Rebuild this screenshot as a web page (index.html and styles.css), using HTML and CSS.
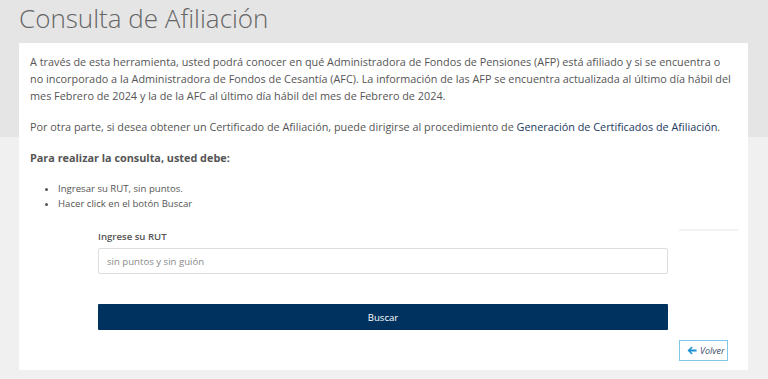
FILE: index.html
```html
<!DOCTYPE html>
<html lang="es">
<head>
    <meta charset="UTF-8">
    <meta name="viewport" content="width=device-width, initial-scale=1.0">
    <title>Consulta de Afiliación</title>
    <link rel="stylesheet" href="styles.css">
</head>
<body>
    <h1 class="page-title">Consulta de Afiliación</h1>

    <div class="card">
        <p>A través de esta herramienta, usted podrá conocer en qué Administradora de Fondos de Pensiones (AFP) está afiliado y si se encuentra o no incorporado a la Administradora de Fondos de Cesantía (AFC). La información de las AFP se encuentra actualizada al último día hábil del mes Febrero de 2024 y la de la AFC al último día hábil del mes de Febrero de 2024.</p>
        <p>Por otra parte, si desea obtener un Certificado de Afiliación, puede dirigirse al procedimiento de <a href="#" class="link">Generación de Certificados de Afiliación</a>.</p>
        <p class="steps-title">Para realizar la consulta, usted debe:</p>
        <ul class="steps">
            <li>Ingresar su RUT, sin puntos.</li>
            <li>Hacer click en el botón Buscar</li>
        </ul>

        <div class="form-grid">
            <form class="rut-form" onsubmit="return false">
                <label class="rut-label" for="rut">Ingrese su RUT</label>
                <input class="rut-input" id="rut" type="text" placeholder="sin puntos y sin guión">
                <button class="btn-buscar" type="submit">Buscar</button>
            </form>
            <div class="aside">
                <hr class="aside-line">
            </div>
            <div class="back-cell">
                <button class="btn-volver" type="button">
                    <svg class="arrow" width="10" height="9" viewBox="0 0 10 9"><path d="M4.6 0.4 L5.7 1.5 L3.6 3.6 H9.6 V5.4 H3.6 L5.7 7.5 L4.6 8.6 L0.5 4.5 Z" fill="#1b8fd2"/></svg>
                    Volver
                </button>
            </div>
        </div>
    </div>
</body>
</html>
```

FILE: styles.css
```css
body {
    font-family: "Open Sans", Arial, sans-serif;
    margin: 0;
    padding: 0 20px 0 19px;
    background: linear-gradient(#e5e5e5 137px, #f0f0f0 137px);
    color: #555;
    min-height: 379px;
    box-sizing: border-box;
}
.page-title {
    font-size: 26px;
    font-weight: 300;
    color: #666;
    margin: 0;
    padding-top: 1px;
    height: 42px;
    line-height: 34px;
}
.card {
    background-color: white;
    padding: 10px 13px 9px 11px;
    font-size: 10.85px;
    line-height: 17px;
}
.card p {
    margin: 0 0 14px 0;
}
.link {
    color: #23395d;
    text-decoration: none;
}
.steps-title {
    font-weight: bold;
}
.card .steps-title {
    margin-bottom: 15px;
}
.steps {
    margin: 0;
    padding-left: 28px;
    font-size: 9.6px;
    line-height: 15px;
}
.form-grid {
    display: grid;
    grid-template-columns: 570px 59px;
    column-gap: 11px;
    padding-left: 68px;
    margin-top: 18px;
}
.rut-form {
    display: flex;
    flex-direction: column;
}
.rut-label {
    font-size: 9.6px;
    font-weight: 600;
    line-height: 16px;
    margin-bottom: 3px;
}
.rut-input {
    height: 26px;
    box-sizing: border-box;
    border: 1px solid #dedede;
    border-radius: 2px;
    padding: 0 8px;
    font-family: inherit;
    font-size: 9.6px;
    color: #555;
    margin-bottom: 30px;
}
.rut-input::placeholder {
    color: #8a8a8a;
}
.btn-buscar {
    height: 26px;
    border: none;
    border-radius: 1px;
    background-color: #00325f;
    color: white;
    font-family: inherit;
    font-size: 9.6px;
}
.aside-line {
    border: none;
    border-top: 2px solid #f3f3f3;
    margin: 0;
}
.back-cell {
    grid-column: 2;
    padding-top: 10px;
}
.btn-volver {
    display: flex;
    align-items: center;
    gap: 3px;
    width: 49px;
    height: 21px;
    box-sizing: border-box;
    padding: 0 0 0 7px;
    border: 1px solid #7ec8e8;
    background: white;
    color: #3c4d6c;
    font-family: inherit;
    font-size: 9px;
    font-style: italic;
}
```
